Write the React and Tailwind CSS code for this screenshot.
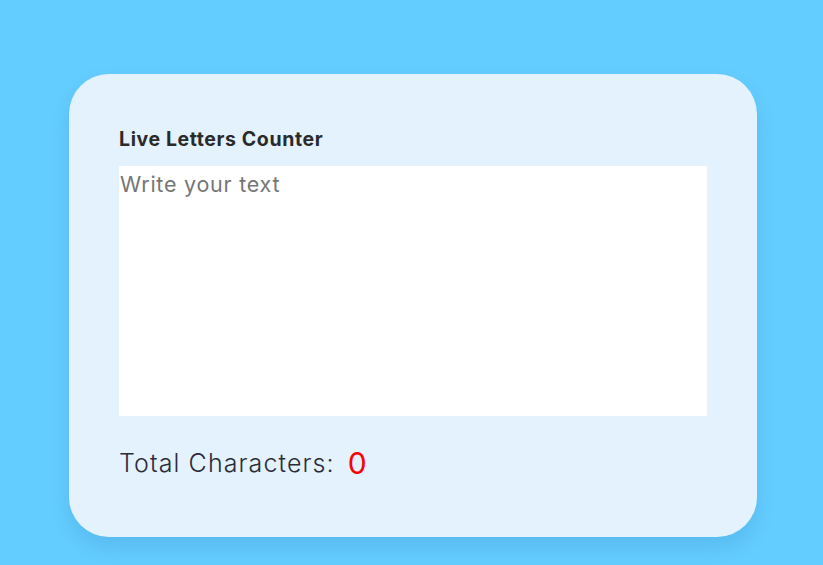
import React, { useState } from "react";

export default function App() {
  const [text, setText] = useState("");
  return (
    <div
      className="min-h-[565px] w-full bg-[#64cdff] flex justify-center pt-[74px] pl-[3px]"
      style={{ fontFamily: "Inter, 'Noto Sans', sans-serif" }}
    >
      <div className="w-[688px] h-[463px] bg-[#e3f2fd] rounded-[40px] shadow-[0_10px_20px_rgba(0,60,120,0.12)] px-[50px] pt-[50px] flex flex-col">
        <h1 className="text-[19.5px] font-bold text-[#2a2a2a] leading-[30px] tracking-[0.6px]">
          Live Letters Counter
        </h1>
        <textarea
          value={text}
          onChange={(e) => setText(e.target.value)}
          placeholder="Write your text"
          className="mt-[12px] w-[588px] h-[250px] bg-white outline-none resize-none border-0 p-0 pl-[1px] text-[21.5px] leading-[36px] tracking-[0.75px] text-[#333] placeholder:text-[#767676]"
        />
        <div className="mt-[29px] flex items-center text-[25px] leading-[36px] font-light tracking-[1.1px] text-[#2b2b3a]">
          <span>Total Characters:</span>
          <span className="ml-[13px] text-[#ff0000] font-normal text-[30px] tracking-normal">{text.length}</span>
        </div>
      </div>
    </div>
  );
}
